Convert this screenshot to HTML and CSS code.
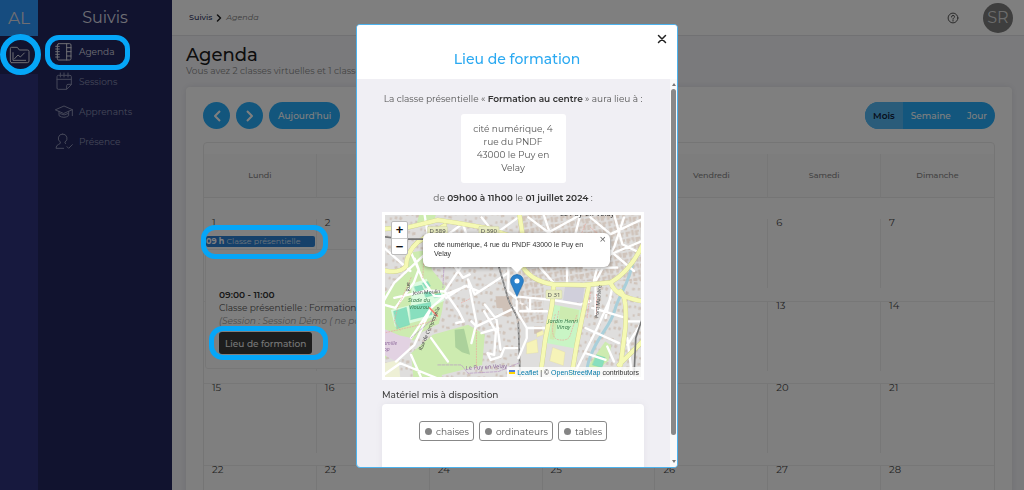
FILE: index.html
```html
<!DOCTYPE html>
<html lang="fr">
<head>
<meta charset="utf-8">
<meta name="viewport" content="width=device-width, initial-scale=1">
<title>Agenda</title>
<link rel="stylesheet" href="styles.css">
</head>
<body>
<div class="app">
  <nav class="rail" aria-label="Modules">
    <a class="logo" href="#">AL</a>
    <a class="rail-link ring ring-circle" href="#" aria-label="Suivis">
      <svg class="icon-folder" viewBox="25 138 63 54"><path d="M33 188h47q5 0 5-5v-29q0-4-5-4H56l-6-8H32q-3 0-3 4v37q0 5 4 5zM37 158v23h38M42 176l10-11 7 6 12-12"/></svg>
    </a>
  </nav>
  <nav class="sidebar" aria-label="Suivis">
    <h2 class="sidebar-title">Suivis</h2>
    <ul class="menu">
      <li><a class="menu-link active ring ring-menu" href="#">
        <svg class="icon" viewBox="166 125 54 57"><path d="M177 130h33q4 0 4 4v41q0 4-4 4h-33q-4 0-4-4v-41q0-4 4-4zM201 130v49M201 142h13M201 154h13M201 167h13M168 138h11M168 146h11M168 154h11M168 162h11M168 170h11"/></svg>
        Agenda</a></li>
      <li><a class="menu-link" href="#">
        <svg class="icon" viewBox="166 217 54 57"><path d="M200 269h-24q-4 0-4-4v-34q0-4 4-4h35q4 0 4 4v24l-14 14v-11q0-4 4-4h10M172 239h43M182 220v12M193 220v12M205 220v12"/></svg>
        Sessions</a></li>
      <li><a class="menu-link" href="#">
        <svg class="icon" viewBox="166 303 54 57"><path d="M168 326l25-11 25 11-25 11zM178 331v13q15 10 29 0v-13M218 326v18M181 338q13 8 24 0"/></svg>
        Apprenants</a></li>
      <li><a class="menu-link" href="#">
        <svg class="icon" viewBox="166 394 54 57"><path d="M189 400a13 13 0 0 1 7 24q-2 3 2 5M189 400a13 13 0 0 0-7 24q2 5-5 7-8 3-8 12h23M202 438l5 5 11-11"/></svg>
        Présence</a></li>
    </ul>
  </nav>
  <main class="main">
    <header class="topbar">
      <div class="crumbs"><a href="#">Suivis</a>
        <svg class="crumb-arrow" viewBox="0 0 6 8"><path d="M1.5 1l3 3-3 3"/></svg>
        <em>Agenda</em></div>
      <button class="help" type="button" aria-label="Aide">
        <svg viewBox="0 0 12 12"><circle cx="6" cy="6" r="4.9"/><path d="M4.5 5q0-1.600 1.500-1.600t1.500 1.400q0 .8-.8 1.200-.7.400-.7 1.100M6 8.200v.9"/></svg>
      </button>
      <button class="avatar" type="button">SR</button>
    </header>
    <h1>Agenda</h1>
    <p class="lead">Vous avez 2 classes virtuelles et 1 classe présentielle</p>
    <section class="card">
      <div class="toolbar">
        <button class="round" type="button" aria-label="Précédent"><svg viewBox="0 0 10 14"><path d="M8 2L3 7l5 5"/></svg></button>
        <button class="round" type="button" aria-label="Suivant"><svg viewBox="0 0 10 14"><path d="M2 2l5 5-5 5"/></svg></button>
        <button class="today" type="button">Aujourd'hui</button>
        <div class="views">
          <button class="selected" type="button">Mois</button><button type="button">Semaine</button><button type="button">Jour</button>
        </div>
      </div>
      <div class="calendar">
        <table>
          <thead><tr><th>Lundi</th><th>Mardi</th><th>Mercredi</th><th>Jeudi</th><th>Vendredi</th><th>Samedi</th><th>Dimanche</th></tr></thead>
          <tbody>
            <tr class="first">
              <td><div class="day"><span>1</span>
                <a class="event ring ring-event" href="#"><b>09 h</b> Classe présentielle</a></div>
                <div class="details">
                  <b>09:00 - 11:00</b>
                  <p>Classe présentielle : Formation au centre</p>
                  <em>(Session : Session Démo ( ne pas modifier ))</em>
                  <button class="place ring ring-place" type="button">Lieu de formation</button>
                </div></td>
              <td><div class="day"><span>2</span></div></td><td><div class="day"><span>3</span></div></td><td><div class="day"><span>4</span></div></td><td><div class="day"><span>5</span></div></td><td><div class="day"><span>6</span></div></td><td><div class="day"><span>7</span></div></td>
            </tr>
            <tr><td><div class="day"></div></td><td><div class="day"></div></td><td><div class="day"><span>10</span></div></td><td><div class="day"><span>11</span></div></td><td><div class="day"><span>12</span></div></td><td><div class="day"><span>13</span></div></td><td><div class="day"><span>14</span></div></td></tr>
            <tr><td><div class="day"><span>15</span></div></td><td><div class="day"><span>16</span></div></td><td><div class="day"><span>17</span></div></td><td><div class="day"><span>18</span></div></td><td><div class="day"><span>19</span></div></td><td><div class="day"><span>20</span></div></td><td><div class="day"><span>21</span></div></td></tr>
            <tr><td><div class="day"><span>22</span></div></td><td><div class="day"><span>23</span></div></td><td><div class="day"><span>24</span></div></td><td><div class="day"><span>25</span></div></td><td><div class="day"><span>26</span></div></td><td><div class="day"><span>27</span></div></td><td><div class="day"><span>28</span></div></td></tr>
          </tbody>
        </table>
      </div>
    </section>
  </main>
</div>

<div class="shade"></div>
<div class="modal-layer">
<section class="modal" role="dialog" aria-modal="true" aria-labelledby="modal-title">
  <header class="modal-head">
    <button class="close" type="button" aria-label="Fermer"><svg viewBox="0 0 10 10"><path d="M1.500 1.500l7 7M8.500 1.500l-7 7"/></svg></button>
    <h2 id="modal-title">Lieu de formation</h2>
  </header>
  <div class="modal-body">
    <div class="content">
      <p class="line">La classe présentielle « <b>Formation au centre</b> » aura lieu à :</p>
      <address>cité numérique, 4<br>rue du PNDF<br>43000 le Puy en<br>Velay</address>
      <p class="line">de <b>09h00 à 11h00</b> le <b>01 juillet 2024</b> :</p>
      <div class="map">
        <svg class="tiles" viewBox="385 216 256 161" preserveAspectRatio="xMidYMid slice" role="img" aria-label="Plan du Puy-en-Velay">
          <defs>
            <pattern id="houses" width="62" height="54" patternUnits="userSpaceOnUse" patternTransform="rotate(12)">
              <path d="M4 5l10-2 2 8-10 3zM36 8l9-3 1 7-8 3zM54 3h6v8h-6zM7 23h7v8H7zM21 20l9 3-3 9-7-3zM55 29h6v7h-6zM26 41h6v8h-6zM38 43l10-2 2 8h-11z"/>
            </pattern>
            <pattern id="blocks" width="46" height="40" patternUnits="userSpaceOnUse" patternTransform="rotate(-10)">
              <path d="M1 2h12v10H9v6H1zM16 1h9v14h-6V9h-3zM28 3h15v8h-5v7H28zM2 22h14v7H9v8H2zM19 19h8v17h-8zM30 22h13v6h-4v9h-9z"/>
            </pattern>
          </defs>
          <rect class="ground" x="385" y="216" width="256" height="161"/>
          <g transform="translate(375 205) scale(.3333)">
            <rect class="houses" x="28" y="30" width="410" height="490"/>
            <path class="building" d="M362 275h48v60h-22l-5-25h-18z"/>
            <path class="park" d="M28 270l70-65 10-60 50-8 15 60 40 50-10 70-10 40-50 25-25 25-90-25z"/>
            <path class="park" d="M110 445l65-55 105-30 50 30-8 90-120 30v12h-85zM28 375l50 15-50 80zM135 30l50 0-10 30-50 5z"/>
            <path class="wood" d="M240 375l28-3 18 78-24-8-20-15z"/>
            <path class="stadium" d="M112 238l45-15 15 50 32-10 6 25-40 20 12 28-75 20-45 10-12-50 60-15z"/>
            <path class="pitch" d="M58 320l38-12 10 52-38 12zM106 305l62-12 5 37-64 15zM120 247l22-5 6 14-22 8zM144 236l16-5 8 14-16 6zM148 262l20-5 6 16-20 5zM178 270l20-4 3 10-21 4z"/>
            <path class="school" d="M28 372l48 20 36 8-12 40-36 28-36-18z"/>
            <path class="field" d="M28 475l45-10 5 55H28z"/>
            <path class="street" d="M28 290L60 235l75-70 60-55 60-45M28 300l35 10 55-75 15-40-12-32M110 145l35 80 35 50 20 0 75-30 35 15M60 280l100-22 50 3 50-75 10-55M210 260l42 60 15 30-22 5M215 280l55-35M400 205l-100 65-20-45 25 130-15 60M170 400l50 70M110 450l30 68M305 365l115-55M328 320l35 60-5 70-20-5 10 20 30-10 10-25h45M330 300l35 45 12 90M320 385l50-15M290 350l15 15M400 155v105l60 55M110 400l60-90 40-35M65 470l55-50 50-110M28 510l50-35 110 45M150 30l10 60M28 130l80 70M265 60l20 60M320 40l40 50 70-50M225 165l40 55 20-10M240 185l60-50"/>
            <path class="main-case" d="M20 75l80-5 90-22 55 8 85 15 110 35M20 196q55 15 75-10 3-45 35-72l80-50"/>
            <path class="main-road" d="M20 75l80-5 90-22 55 8 85 15 110 35M20 196q55 15 75-10 3-45 35-72l80-50"/>
            <path class="rail-line" d="M20 97l70 8h60M360 130l12 57 28 98c10 30 28 40 30 70l5 160"/>
            <path class="rail-dash" d="M360 130l12 57 28 98c10 30 28 40 30 70l5 160"/>
            <path class="footway" d="M28 385l90-20 70-20M150 130l-5 90M110 220l-40 90-10 40 20 30M260 295l25-12M305 375v120M165 310l25 25"/>
            <path class="boundary" d="M210 150l-5 100M110 400l75-65M190 480h70l20 25 90-5 60-25"/>
            <path class="footway-strong" d="M165 310l23 24"/>
            <g class="map-text">
              <text x="115" y="270" transform="rotate(-3 115 270)">Jean Moulin</text>
              <text x="108" y="260" transform="rotate(-96 108 260)">Rue</text>
              <text x="142" y="438" transform="rotate(-67 142 438)">Rue de Compostelle</text>
            </g>
            <g class="green-text"><text x="134" y="292">Stade du</text><text x="134" y="312">Viouzou</text></g>
            <g class="town-text"><text x="335" y="492" transform="rotate(-3 335 492)">Le Puy en Velay</text></g>
            <g class="school-text"><text x="48" y="420">amille</text><text x="38" y="440">op</text></g>
            <g class="shield"><rect x="159" y="67" width="60" height="27" rx="3"/><text x="189" y="87">D 589</text><rect x="312" y="67" width="60" height="27" rx="3"/><text x="342" y="87">D 590</text></g>
          </g>
          <g transform="translate(510 205) scale(.3333)">
            <rect class="blocks" x="25" y="30" width="370" height="200"/>
            <rect class="blocks" x="20" y="225" width="80" height="130"/>
            <rect class="houses" x="200" y="225" width="195" height="290"/>
            <path class="building" d="M72 365h24v22H72z"/>
            <path class="plaza" d="M165 240l57 6-6 50-58-8z"/>
            <path class="garden" d="M128 300l90 18-27 112-83-15z"/>
            <path class="park" d="M150 305l56 12-4 35-56-10zM125 350l15 5-8 50-14-2z"/>
            <path class="yellow-building" d="M50 415l30-12 4 40-34 4zM80 385l18-8 3 12-20 8zM128 428l36 14-5 40-40-14z"/>
            <path class="park" d="M284 410l18 12-8 45-34 28-28-10z"/>
            <path class="pitch" d="M258 450l26 8-10 30-28-8z"/>
            <path class="river" d="M368 165c-10 70-45 110-55 150s-40 70-60 110-20 50-28 90"/>
            <path class="street" d="M55 40l60 45 90-50M100 30l20 60 60 10M210 30l-20 80M240 40l60 50 95-45M310 30l25 90 60 30M340 40l-30 90-60 110M240 90l130 110M280 110l-30 120M170 185v50M90 190l40 45M10 275l50 5 60 5 90 15 30-10M20 290v30l30 50v30l-25 60M50 370h60M30 320h80M60 280v40M245 310l100 30M225 370l100 45M285 340l20-90M200 490l60-120 40-90M310 470l-20-45M350 420l45-70M345 350h50M365 520l-15-120M225 445l60 20M300 150l95-40M220 190h100M255 250v80"/>
            <path class="main-case" d="M28 30l10 65M40 190q25 40 90 50l90 2 80-8q55-30 95-110M300 235q15 42 95 55M330 260q20 20 14 110l-14 110M325 480l70-70M130 245l-5 60-20 100-12 90M235 245l-18 85-18 90-15 90"/>
            <path class="main-road" d="M28 30l10 65M40 190q25 40 90 50l90 2 80-8q55-30 95-110M300 235q15 42 95 55M330 260q20 20 14 110l-14 110M325 480l70-70M130 245l-5 60-20 100-12 90M235 245l-18 85-18 90-15 90"/>
            <path class="footway" d="M135 330q-20 70 10 75t35-15l20-60M145 320l-5 30M240 265l-10 75M258 270v60M225 60l-25 60M240 70l40 35"/>
            <path class="rail-line" d="M395 340l-20 60-5 110"/>
            <g class="green-text"><text x="158" y="354">Jardin Henri</text><text x="160" y="374">Vinay</text></g>
            <g class="map-text"><text x="263" y="340" transform="rotate(-84 263 340)">Pont Machère</text></g>
            <g class="town-large"><text x="230" y="37">Le Puy-en-Velay</text></g>
            <g class="shield"><rect x="107" y="257" width="48" height="26" rx="3"/><text x="131" y="277">D 31</text></g>
          </g>
        </svg>
        <div class="zoom"><button type="button" aria-label="Zoom avant">+</button><button type="button" aria-label="Zoom arrière">−</button></div>
        <svg class="marker" viewBox="0 0 25 41"><path d="M12.500 1C6 1 1 6 1 12.500c0 3 1 5 2.500 8L12.500 40l9-19.500c1.500-3 2.500-5 2.500-8C24 6 19 1 12.500 1z"/><circle cx="12.500" cy="12.500" r="4.500"/></svg>
        <div class="bubble">cité numérique, 4 rue du PNDF 43000 le Puy en Velay<button type="button" aria-label="Fermer">×</button></div>
        <div class="credit"><svg viewBox="0 0 12 8"><path fill="#4c7be1" d="M0 0h12v4H0z"/><path fill="#ffd500" d="M0 4h12v4H0z"/></svg><span><a href="#">Leaflet</a> | © <a href="#">OpenStreetMap</a> contributors</span></div>
      </div>
      <h3>Matériel mis à disposition</h3>
      <ul class="chips"><li>chaises</li><li>ordinateurs</li><li>tables</li></ul>
    </div>
    <div class="scroll"><i class="up"></i><i class="thumb"></i><i class="down"></i></div>
  </div>
</section>
</div>
</body>
</html>
```
FILE: styles.css
```css
* { box-sizing: border-box; }
body { margin: 0; height: 100vh; overflow: hidden; font: 9px/13px Montserrat, Inter, sans-serif; color: #555; }
a { color: inherit; text-decoration: none; }
button { border: 0; padding: 0; background: none; font: inherit; color: inherit; }
ul, p, h1, h2, h3 { margin: 0; padding: 0; list-style: none; font-weight: 400; }
svg { fill: none; stroke: currentColor; stroke-linecap: round; stroke-linejoin: round; display: block; }
b { font-weight: 700; }

.app { display: flex; height: 100vh; overflow: hidden; }
.rail { width: 38px; flex: none; background: #2e337c; color: #dcdce6; }
.logo { display: flex; height: 36px; align-items: center; justify-content: center; background: #2c98ff; font-size: 17px; font-weight: 400; }
.rail-link { display: flex; height: 38px; align-items: center; justify-content: center; background: #22275e; }
.icon-folder { width: 21px; height: 18px; stroke-width: 3; }
.sidebar { width: 134px; flex: none; background: #22275e; color: #8b8fb2; }
.sidebar-title { height: 36px; line-height: 35px; font-size: 16px; text-align: center; color: #dcdce6; }
.menu-link { display: flex; height: 30px; align-items: center; gap: 6px; padding-left: 17px; }
.menu-link.active { color: #dcdce6; }
.icon { width: 18px; height: 19px; stroke-width: 3; }

.ring { position: relative; }
.ring::after { content: ""; position: absolute; z-index: 20; border: 5px solid #05a6f8; border-radius: 14px; pointer-events: none; }
.ring-circle::after { inset: -2px -3px -1px 0; border-width: 6px; border-radius: 50%; }
.ring-menu::after { inset: -1px 42px -4px 7px; }
.ring-event::after { inset: -11px -13px -12px -5px; }
.ring-place::after { inset: -6px -16px -6px -10px; }

.main { flex: 1; min-width: 0; padding: 0 12px 0 14px; background: #f5f5f9; }
.topbar { display: flex; align-items: center; height: 36px; margin: 0 -12px 0 -14px; padding: 0 11px 0 17px; background: #fff; border-bottom: 1px solid #e2e2e6; }
.crumbs { display: flex; align-items: center; gap: 4px; margin-right: auto; font-size: 8px; color: #777; }
.crumbs a { color: #2a2f5c; font-weight: 500; }
.crumb-arrow { width: 6px; height: 8px; color: #222; stroke-width: 1.500; }
.help { color: #555; margin-right: 24px; }
.help svg { width: 12px; height: 12px; }
.avatar { width: 30px; height: 30px; border-radius: 50%; background: #7c7c7c; color: #d8d8d8; font-size: 16px; font-weight: 400; }
h1 { padding-top: 9px; font-size: 18px; line-height: 20px; font-weight: 500; color: #1c1c1c; }
.lead { color: #888; line-height: 12px; }
.card { margin-top: 10px; padding: 15px 17px 0; background: #fff; border-radius: 4px; box-shadow: 0 0 6px #dcdce2; }
.toolbar { display: flex; gap: 6px; color: #fff; font-weight: 500; }
.round, .today, .views { height: 27px; border-radius: 14px; background: #26adfa; }
.round { display: flex; width: 27px; align-items: center; justify-content: center; }
.round svg { width: 10px; height: 14px; stroke-width: 2; stroke-linecap: butt; }
.today { padding: 0 9px; }
.views { display: flex; overflow: hidden; margin-left: auto; }
.views button { padding: 0 8px; }
.views .selected { background: #55b9f5; color: #10203a; font-weight: 600; }
.calendar { margin-top: 13px; padding-top: 11px; border: 1px solid #eaeaea; border-radius: 4px; }
table { width: 100%; table-layout: fixed; border-collapse: separate; border-spacing: 0; }
th { height: 44px; padding: 0; font-size: 8px; font-weight: 500; color: #858585; background: #fafafa; border-right: 1px solid #efefef; border-bottom: 1px solid #eaeaea; }
td { height: 82px; padding: 0; vertical-align: top; border-bottom: 1px solid #eeeeee; }
.day { height: 69px; border-right: 1px solid #eeeeee; }
th:last-child, td:last-child .day { border-right: 0; }
.day > span { display: block; padding-left: 8px; line-height: 8px; font-size: 10px; color: #484848; }
.first td { position: relative; height: 104px; padding-top: 21px; }
.event { display: block; margin: 9px 1px 0 2px; height: 11px; line-height: 11px; border-radius: 2px; background: #2b80d4; color: #d4e4f4; font-size: 8px; white-space: nowrap; }
.event b { color: #fff; }
.details { position: absolute; top: 51px; left: 1px; width: 262px; height: 120px; padding: 38px 13px 0; background: #fff; border: 1px solid #efefef; border-radius: 3px; white-space: nowrap; color: #555; }
.details b { color: #333; display: block; font-weight: 600; }
.details em { display: block; color: #999; }
.place { margin-top: 5px; height: 22px; padding: 0 6px; border-radius: 3px; background: #3a3a3a; color: #eee; font-weight: 500; }

.shade { position: fixed; inset: 0; z-index: 10; background: rgba(0, 0, 0, .5); }
.modal-layer { position: fixed; inset: 0; z-index: 30; display: flex; justify-content: center; align-items: flex-start; padding: 24px 0 22px 10px; }
.modal { display: flex; flex-direction: column; width: 322px; height: 100%; overflow: hidden; border: 1px solid #4db3ee; border-radius: 4px; background: #f0eff4; }
.modal-head { flex: none; background: #fff; height: 54px; padding-top: 9px; text-align: center; }
.close { display: block; margin: 0 10px 0 auto; color: #222; }
.close svg { width: 10px; height: 10px; stroke-width: 1.500; }
.modal-head h2 { line-height: 26px; font-size: 14px; font-weight: 500; color: #2ba9f1; margin-top: 2px; }
.modal-body { display: flex; flex: 1; min-height: 0; overflow: hidden; }
.content { flex: 1; min-width: 0; padding: 13px 26px 0 25px; }
.line { text-align: center; white-space: nowrap; }
.line b { color: #333; font-weight: 600; }
address { width: 105px; margin: 9px auto 8px; padding: 8px 0 9px; background: #fff; border-radius: 3px; font-style: normal; text-align: center; }
.map { position: relative; height: 168px; margin-top: 8px; border: 3px solid #fff; overflow: hidden; font: 7px/9px "Liberation Sans", sans-serif; color: #333; }
.tiles { width: 100%; height: 100%; stroke: none; font-family: "Noto Sans", sans-serif; }
.ground { fill: #dfdedd; }
.houses { fill: url(#houses); }
.blocks { fill: url(#blocks); }
#houses path, #blocks path { fill: #d0c4bb; }
.building { fill: #cfc1b7; }
.park { fill: #cdebb0; }
.wood { fill: #abd19b; }
.stadium { fill: #dcfbe0; }
.garden { fill: #c9f5c5; }
.pitch { fill: #88dfbe; stroke: #70cda9; stroke-width: 1; }
.school { fill: #e2d2e2; }
.field { fill: #eef0d5; }
.plaza { fill: #d0cfdb; }
.yellow-building { fill: #f6f3b8; stroke: #e0dba0; stroke-width: 1; }
.river { fill: none; stroke: #a9cfda; stroke-width: 9; }
.street { fill: none; stroke: #fff; stroke-width: 7; }
.main-case { fill: none; stroke: #cdd08e; stroke-width: 14; }
.main-road { fill: none; stroke: #f5f9b4; stroke-width: 12; }
.rail-line { fill: none; stroke: #777; stroke-width: 5; }
.rail-dash { fill: none; stroke: #ccc; stroke-width: 2; stroke-dasharray: 8 8; }
.footway { fill: none; stroke: #eea39a; stroke-width: 2; stroke-dasharray: 3 5; }
.footway-strong { fill: none; stroke: #f08a78; stroke-width: 5; }
.boundary { fill: none; stroke: #b795c4; stroke-width: 2; stroke-dasharray: 8 4; }
.map-text { font-size: 15px; fill: #444; }
.green-text { font-size: 17px; font-style: italic; fill: #3b7d50; text-anchor: middle; }
.town-text { font-size: 17px; fill: #8d699b; text-anchor: middle; }
.school-text { font-size: 15px; font-style: italic; fill: #8d699b; text-anchor: middle; }
.town-large { font-size: 22px; fill: #333; text-anchor: middle; }
.shield { font-size: 18px; text-anchor: middle; fill: #555; }
.shield rect { fill: #e9edc0; stroke: #c2c79c; stroke-width: 1; }
.zoom { position: absolute; left: 6px; top: 6px; width: 17px; border: 1px solid #bbb; border-radius: 2px; background: #fff; }
.zoom button { display: block; width: 100%; height: 16px; font: bold 13px/16px "Liberation Sans", sans-serif; color: #111; }
.zoom button + button { border-top: 1px solid #ccc; }
.marker { position: absolute; left: 50%; top: 59px; width: 14px; height: 23px; margin-left: -3px; fill: #2a81cb; stroke: #2268a5; }
.marker circle { fill: #fff; stroke: none; }
.bubble { position: absolute; left: 38px; right: 31px; top: 18px; height: 34px; padding: 7px 24px 0 11px; border-radius: 6px; background: #fff; box-shadow: 0 1px 4px rgba(0, 0, 0, .4); }
.bubble::after { content: ""; position: absolute; left: 50%; top: 100%; margin-left: -6px; border: 6px solid transparent; border-top-color: #fff; border-bottom: 0; }
.bubble button { position: absolute; right: 4px; top: 2px; font-size: 11px; color: #666; }
.credit { position: absolute; right: 0; bottom: 0; display: flex; gap: 2px; align-items: center; padding: 0 2px; height: 10px; background: rgba(255, 255, 255, .8); white-space: nowrap; }
.credit svg { width: 6px; height: 4px; stroke: none; }
.credit a { color: #0078a8; }
h3 { margin-top: 8px; font-size: 9px; line-height: 13px; color: #444; font-weight: 500; }
.chips { display: flex; justify-content: center; gap: 5px; height: 90px; margin-top: 3px; padding-top: 17px; background: #fff; border-radius: 4px; box-shadow: 0 0 6px #e2e1e8; }
.chips li { display: flex; align-items: center; gap: 4px; height: 20px; padding: 0 4px 0 5px; border: 1px solid #888; border-radius: 3px; }
.chips li::before { content: ""; width: 7px; height: 7px; border-radius: 50%; background: #858585; }
.scroll { display: flex; flex-direction: column; align-items: center; width: 7px; flex: none; padding: 4px 0; background: #fafafa; }
.up, .down { border: 2px solid transparent; }
.up { border-bottom: 3px solid #777; border-top: 0; }
.down { border-top: 3px solid #777; border-bottom: 0; margin-top: auto; }
.thumb { width: 5px; height: 91%; margin-top: 3px; border-radius: 3px; background: #898989; }
```
